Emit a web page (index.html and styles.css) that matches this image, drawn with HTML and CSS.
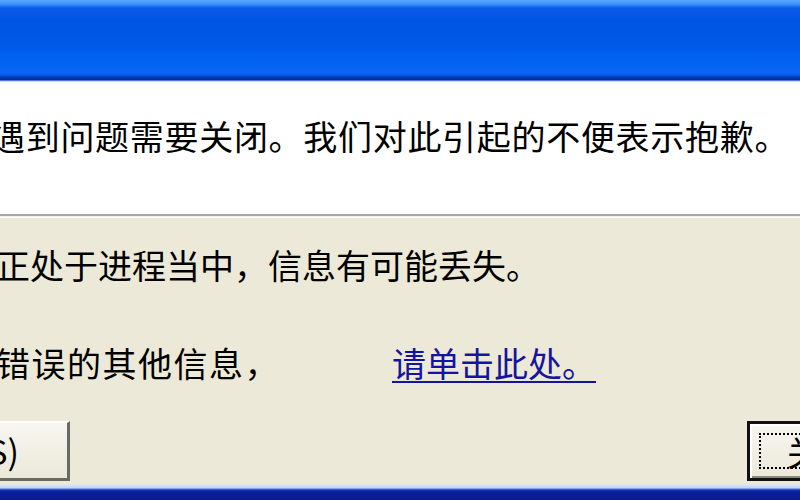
FILE: index.html
```html
<!DOCTYPE html>
<html lang="zh-CN">
<head>
    <meta charset="UTF-8">
    <title>错误报告</title>
    <link rel="stylesheet" href="styles.css">
</head>
<body>
    <div class="dialog">
        <div class="titlebar"></div>

        <div class="dialog-header">
            <p class="headline">遇到问题需要关闭。我们对此引起的不便表示抱歉。</p>
        </div>

        <div class="divider"></div>

        <div class="dialog-body">
            <p class="line line-lost">正处于进程当中，信息有可能丢失。</p>
            <p class="line line-more">
                <span class="more-text">错误的其他信息，</span>
                <a href="#" class="more-link">请单击此处。</a>
            </p>

            <div class="btn-row">
                <button class="btn btn-send">发送错误报告(S)</button>
                <button class="btn btn-default"><span class="focus-ring">关闭</span></button>
            </div>
        </div>

        <div class="frame-bottom"></div>
    </div>
</body>
</html>
```

FILE: styles.css
```css
:root {
    --face: #ece9d8;
    --text: #000000;
    --link: #14149e;
    --title-top: #3d95ff;
    --title-mid: #0055e3;
    --title-low: #0a66f6;
    --frame-dark: #0a1f9a;
}

* {
    margin: 0;
    padding: 0;
    box-sizing: border-box;
}

html, body {
    width: 800px;
    height: 500px;
    overflow: hidden;
}

body {
    font-family: "Noto Sans CJK SC", "Noto Sans", sans-serif;
    font-size: 34px;
    color: var(--text);
    background-color: var(--face);
}

.dialog {
    width: 800px;
    height: 500px;
    display: flex;
    flex-direction: column;
}

/* barre de titre bleue */
.titlebar {
    height: 82px;
    flex-shrink: 0;
    background: linear-gradient(to bottom,
        #5aa6ff 0px, var(--title-top) 4px, #0a5ce8 8px,
        var(--title-mid) 20px, #0058e6 40px, #0062f2 60px,
        var(--title-low) 72px, #0a5ae8 75px, #0040b8 77px,
        #002c96 80px, #a8c4f0 81px, #e8f0ff 82px);
}

.dialog-header {
    height: 132px;
    flex-shrink: 0;
    background-color: #ffffff;
    padding-top: 34px;
}

.headline {
    line-height: 40px;
    white-space: nowrap;
    letter-spacing: 0.7px;
    margin-left: -9px;
}

.divider {
    height: 4px;
    flex-shrink: 0;
    border-top: 2px solid #a9a8a2;
    border-bottom: 1px solid #ffffff;
    background-color: #f4f3ee;
}

.dialog-body {
    flex: 1;
    padding-top: 27px;
    display: flex;
    flex-direction: column;
}

.line {
    line-height: 40px;
    white-space: nowrap;
}

.line-lost {
    margin-left: -4px;
}

.line-more {
    display: flex;
    margin-top: 58px;
    margin-left: -4px;
}

.more-text {
    letter-spacing: 1.5px;
}

.more-link {
    margin-left: 112px;
    color: var(--link);
    text-decoration: underline;
    text-decoration-thickness: 2px;
    text-underline-offset: 4px;
}

.btn-row {
    display: flex;
    justify-content: space-between;
    margin-top: 38px;
}

.btn {
    height: 60px;
    font-family: inherit;
    font-size: 34px;
    white-space: nowrap;
    color: var(--text);
    background: linear-gradient(to bottom, #f7f6f1, var(--face));
    cursor: pointer;
}

.btn-send {
    width: 340px;
    margin-left: -270px;
    text-align: right;
    padding-right: 48px;
    border: none;
    border-top: 2px solid #ffffff;
    border-left: 2px solid #ffffff;
    border-right: 3px solid #6a6a64;
    border-bottom: 3px solid #6a6a64;
}

.btn-default {
    width: 150px;
    margin-right: -97px;
    border: 3px solid #111111;
    padding: 9px;
    box-shadow: inset 2px 2px 0 #ffffff, inset -2px -2px 0 #8a8a84;
}

.focus-ring {
    display: flex;
    align-items: center;
    justify-content: flex-start;
    height: 100%;
    border: 2px dotted #000000;
    border-right: none;
    padding-left: 26px;
}

.frame-bottom {
    height: 16px;
    flex-shrink: 0;
    margin-top: auto;
    background: linear-gradient(to bottom,
        var(--face) 0px, #d8e4f8 1px, #c0d4f6 4px,
        #4a78dc 5px, #1a34b0 6px, var(--frame-dark) 8px, #0a1a8c 16px);
}
```
